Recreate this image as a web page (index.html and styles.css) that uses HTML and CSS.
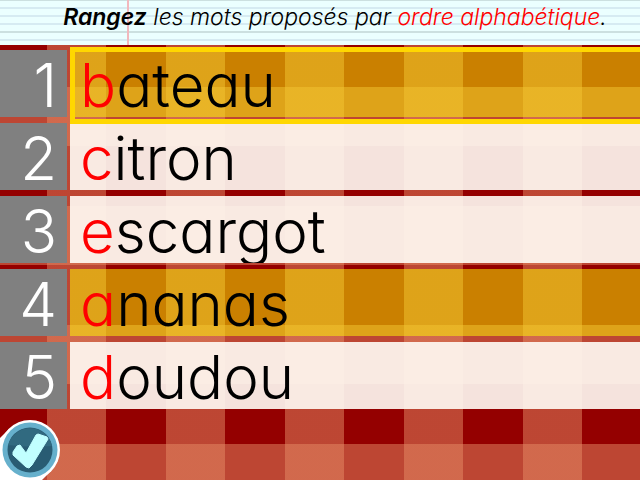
FILE: index.html
```html
<!DOCTYPE html>
<html lang="fr">
<head>
<meta charset="utf-8">
<meta name="viewport" content="width=device-width, initial-scale=1">
<title>Ordre alphabétique</title>
<link rel="stylesheet" href="styles.css">
</head>
<body>
<header class="instruction">
  <p><strong>Rangez</strong> les mots proposés par <span class="key">ordre alphabétique</span>.</p>
</header>
<main>
  <ol class="words">
    <li class="row active"><span class="number">1</span><span class="word marked"><span class="key">b</span>ateau</span></li>
    <li class="row"><span class="number">2</span><span class="word"><span class="key">c</span>itron</span></li>
    <li class="row"><span class="number">3</span><span class="word"><span class="key">e</span>scargot</span></li>
    <li class="row"><span class="number">4</span><span class="word marked"><span class="key">a</span>nanas</span></li>
    <li class="row"><span class="number">5</span><span class="word"><span class="key">d</span>oudou</span></li>
  </ol>
</main>
<button class="check" type="button" aria-label="Valider">
  <svg viewBox="0 0 60 61" aria-hidden="true">
    <path d="M0 19 L9 10 L51 52 L42 61 H0Z" fill="#fff"/>
    <circle cx="30" cy="31" r="30" fill="#fff"/>
    <circle cx="30" cy="31" r="27.5" fill="#66b0cc"/>
    <circle cx="30" cy="31" r="22.5" fill="#295c73"/>
    <path d="M7.5 31 A22.5 22.5 0 0 1 52 27 Q29 29 8 26Z" fill="#316a80"/>
    <path d="M13 33 L17 27 L20 26 L26 34 L36 16 L38 15 L47 18 L48 20 L32 46 L29 49 L26 48 L13 36Z" fill="#c1ffff" stroke="#c1ffff" stroke-linejoin="round"/>
  </svg>
</button>
</body>
</html>
```
FILE: styles.css
```css
* { box-sizing: border-box; }

body {
  margin: 0;
  min-height: 100vh;
  display: flex;
  flex-direction: column;
  font-family: "Century Gothic", Inter, sans-serif;
  font-weight: 300;
  font-feature-settings: "cv11" 1;
  color: #000;
  background-color: #940000;
  background-image:
    repeating-linear-gradient(90deg, transparent 0 60px, rgba(230, 140, 102, .5) 60px 119px),
    repeating-linear-gradient(180deg, #940000 0 60px, #bd4633 60px 119px);
  background-size: calc(100% + 13px) 100%, 100% calc(100% + 92px);
  background-position: -13px 0, 0 -92px;
}

.instruction {
  height: 45px;
  background:
    linear-gradient(#f2b8bd, #f2b8bd) 127px 0 / 2px 100% no-repeat,
    linear-gradient(#cce0e0, #cce0e0) 0 -1px / 100% 2px no-repeat,
    linear-gradient(#cce0e0, #cce0e0) 0 31px / 100% 2px no-repeat,
    repeating-linear-gradient(180deg, #d6ebf2 0 1px, #ebffff 1px 7px, #d6ebf2 7px 8px);
}

.instruction p {
  margin: 0;
  padding-left: 30px;
  font-size: 23px;
  line-height: 34px;
  font-style: italic;
  text-align: center;
  white-space: nowrap;
}

.instruction strong { font-weight: 600; }

.key { color: #f00; }

.words {
  list-style: none;
  margin: 5px 0 0;
  padding: 0;
  display: grid;
  gap: 6px;
}

.row {
  position: relative;
  display: grid;
  grid-template-columns: 67px 1fr;
  grid-template-rows: 67px;
  column-gap: 3px;
  font-size: 60px;
  line-height: 62px;
}

.number {
  padding: 4px 10px 0 0;
  background: #808080;
  color: #fff;
  text-align: right;
}

.word {
  padding: 4px 0 0 10px;
  background: rgba(255, 252, 245, .9);
  overflow: hidden;
}

.word.marked { background: rgba(255, 255, 0, .5); }

.active { z-index: 1; }

.active::after {
  content: "";
  position: absolute;
  inset: -3px 0 -7px 70px;
  border: 5px solid #ffd700;
  border-right: 0;
}

.check {
  position: fixed;
  left: 0;
  bottom: 0;
  width: 60px;
  height: 61px;
  padding: 0;
  border: 0;
  background: none;
}

.check svg { display: block; }
```
